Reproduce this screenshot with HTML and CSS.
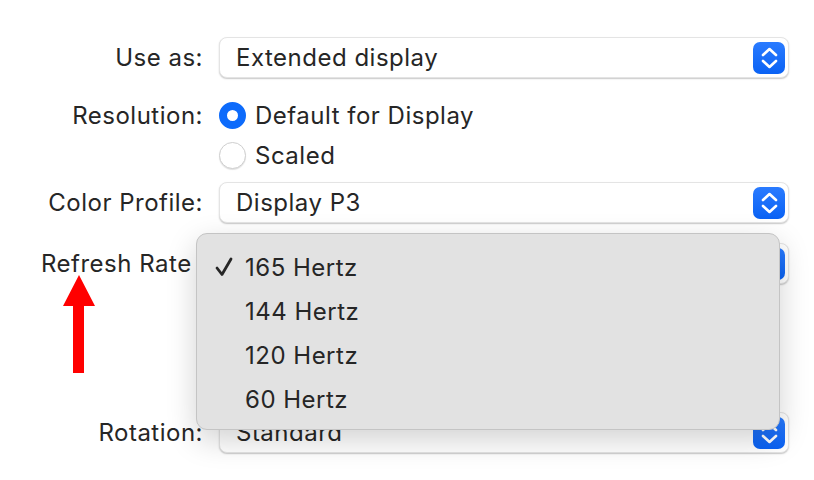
FILE: index.html
```html
<!DOCTYPE html>
<html>
<head>
<meta charset="utf-8">
<link rel="stylesheet" href="styles.css">
</head>
<body>
<div class="form">
  <div class="row row-use">
    <div class="label">Use as:</div>
    <div class="popup">
      <span class="popup-text">Extended display</span>
      <span class="stepper"><svg width="32" height="32" viewBox="0 0 32 32"><path d="M10 13 L16.5 7 L23 13 M10 19 L16.5 25 L23 19" fill="none" stroke="#fff" stroke-width="2.6" stroke-linecap="round" stroke-linejoin="round"/></svg></span>
    </div>
  </div>
  <div class="row row-res">
    <div class="label">Resolution:</div>
    <div class="radio-line"><span class="radio on"></span><span class="radio-text">Default for Display</span></div>
  </div>
  <div class="row row-scaled">
    <div class="label"></div>
    <div class="radio-line"><span class="radio"></span><span class="radio-text">Scaled</span></div>
  </div>
  <div class="row row-color">
    <div class="label">Color Profile:</div>
    <div class="popup">
      <span class="popup-text">Display P3</span>
      <span class="stepper"><svg width="32" height="32" viewBox="0 0 32 32"><path d="M10 13 L16.5 7 L23 13 M10 19 L16.5 25 L23 19" fill="none" stroke="#fff" stroke-width="2.6" stroke-linecap="round" stroke-linejoin="round"/></svg></span>
    </div>
  </div>
  <div class="row row-refresh">
    <div class="label">Refresh Rate</div>
    <div class="popup">
      <span class="popup-text"></span>
      <span class="stepper"><svg width="32" height="32" viewBox="0 0 32 32"><path d="M10 13 L16.5 7 L23 13 M10 19 L16.5 25 L23 19" fill="none" stroke="#fff" stroke-width="2.6" stroke-linecap="round" stroke-linejoin="round"/></svg></span>
    </div>
  </div>
  <div class="row row-rot">
    <div class="label">Rotation:</div>
    <div class="popup">
      <span class="popup-text">Standard</span>
      <span class="stepper"><svg width="32" height="32" viewBox="0 0 32 32"><path d="M10 13 L16.5 7 L23 13 M10 19 L16.5 25 L23 19" fill="none" stroke="#fff" stroke-width="2.6" stroke-linecap="round" stroke-linejoin="round"/></svg></span>
    </div>
  </div>
</div>

<div class="menu">
  <div class="item"><span class="check"><svg width="18" height="20" viewBox="0 0 18 20"><path d="M2 11 L7 17.5 L16 2" fill="none" stroke="#262626" stroke-width="2.8" stroke-linecap="round" stroke-linejoin="round"/></svg></span>165 Hertz</div>
  <div class="item"><span class="check"></span>144 Hertz</div>
  <div class="item"><span class="check"></span>120 Hertz</div>
  <div class="item"><span class="check"></span>60 Hertz</div>
</div>

<svg class="arrow" width="34" height="100" viewBox="0 0 34 100"><polygon points="16,0 32,31 21,31 21,98 10,98 10,31 0,31" fill="#ff0000"/></svg>
</body>
</html>
```

FILE: styles.css
```css
html, body {
  margin: 0;
  padding: 0;
  background: #ffffff;
}
body {
  width: 814px;
  height: 480px;
  overflow: hidden;
  position: relative;
  font-family: Inter, "Liberation Sans", sans-serif;
  font-size: 24px;
  letter-spacing: 0.5px;
  color: #262626;
}
.form {
  display: flex;
  flex-direction: column;
  padding-top: 37px;
}
.row {
  display: grid;
  grid-template-columns: 203px 570px;
  column-gap: 16px;
  align-items: center;
}
.label {
  text-align: right;
  white-space: nowrap;
}
.row-refresh .label {
  text-align: left;
  padding-left: 41px;
}
.popup {
  height: 41px;
  box-sizing: border-box;
  border-radius: 8px;
  background: #fff;
  border: 1px solid #e4e4e4;
  box-shadow: 0 1px 1.5px rgba(0,0,0,0.22);
  display: flex;
  align-items: center;
  justify-content: space-between;
  padding: 0 3px 0 16px;
}
.popup-text {
  white-space: nowrap;
}
.stepper {
  width: 32px;
  height: 32px;
  border-radius: 7px;
  background: linear-gradient(#2a7bff, #0a62f4);
  display: flex;
}
.row-res { margin-top: 22px; height: 30px; }
.row-scaled { margin-top: 10px; height: 30px; }
.row-color { margin-top: 12px; }
.row-refresh { margin-top: 20px; }
.row-rot { margin-top: 128px; }
.radio-line {
  display: flex;
  align-items: center;
  gap: 9px;
}
.radio {
  width: 27px;
  height: 27px;
  box-sizing: border-box;
  border-radius: 50%;
  background: #fff;
  border: 1px solid #cfcfcf;
  box-shadow: 0 1px 1px rgba(0,0,0,0.12);
}
.radio.on {
  border: 8.5px solid #0d6bfb;
  background: #fff;
  box-shadow: none;
}
.menu {
  position: absolute;
  left: 196px;
  top: 233px;
  width: 584px;
  height: 197px;
  box-sizing: border-box;
  background: #e2e2e2;
  border: 1px solid #c4c4c4;
  border-radius: 11px;
  box-shadow: 0 10px 30px rgba(0,0,0,0.18);
  padding-top: 11px;
}
.item {
  height: 44px;
  display: flex;
  align-items: center;
  padding-left: 18px;
  white-space: nowrap;
}
.check {
  width: 30px;
  display: flex;
  align-items: center;
}
.arrow {
  position: absolute;
  left: 63px;
  top: 275px;
}
```
